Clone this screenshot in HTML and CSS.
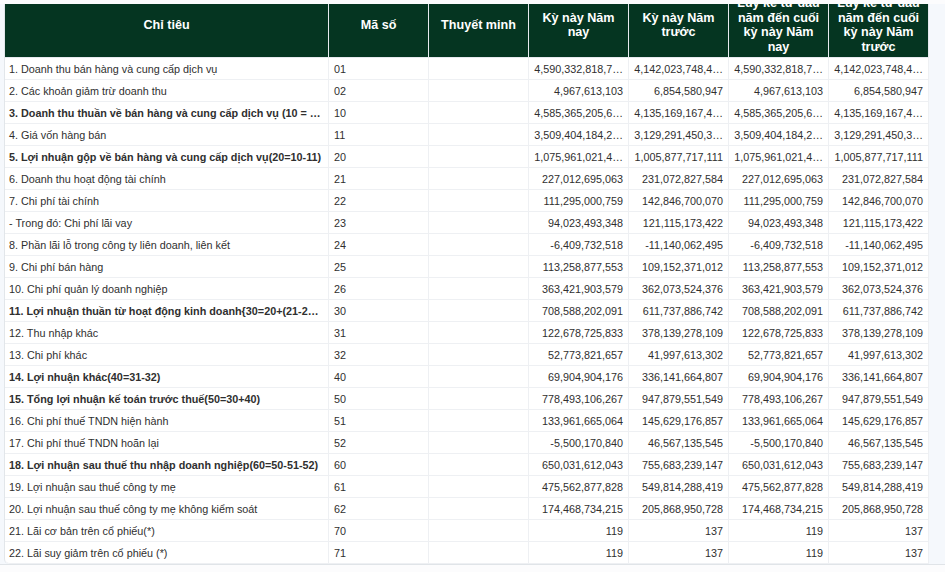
FILE: index.html
```html
<!DOCTYPE html>
<html lang="vi">
<head>
<meta charset="utf-8">
<title>Báo cáo kết quả kinh doanh</title>
<link rel="stylesheet" href="styles.css">
</head>
<body>
<div class="card">
<table class="report">
<colgroup><col class="c-name"><col class="c-col"><col class="c-col"><col class="c-col"><col class="c-col"><col class="c-col"><col class="c-col"></colgroup>
<thead>
<tr><th>Chỉ tiêu</th><th>Mã số</th><th>Thuyết minh</th><th>Kỳ này Năm nay</th><th>Kỳ này Năm trước</th><th>Lũy kế từ đầu năm đến cuối kỳ này Năm nay</th><th>Lũy kế từ đầu năm đến cuối kỳ này Năm trước</th></tr>
</thead>
<tbody>
<tr><td>1. Doanh thu bán hàng và cung cấp dịch vụ</td><td>01</td><td></td><td class="n">4,590,332,818,7…</td><td class="n">4,142,023,748,4…</td><td class="n">4,590,332,818,7…</td><td class="n">4,142,023,748,4…</td></tr>
<tr><td>2. Các khoản giảm trừ doanh thu</td><td>02</td><td></td><td class="n">4,967,613,103</td><td class="n">6,854,580,947</td><td class="n">4,967,613,103</td><td class="n">6,854,580,947</td></tr>
<tr class="b"><td>3. Doanh thu thuần về bán hàng và cung cấp dịch vụ (10 = …</td><td>10</td><td></td><td class="n">4,585,365,205,6…</td><td class="n">4,135,169,167,4…</td><td class="n">4,585,365,205,6…</td><td class="n">4,135,169,167,4…</td></tr>
<tr><td>4. Giá vốn hàng bán</td><td>11</td><td></td><td class="n">3,509,404,184,2…</td><td class="n">3,129,291,450,3…</td><td class="n">3,509,404,184,2…</td><td class="n">3,129,291,450,3…</td></tr>
<tr class="b"><td>5. Lợi nhuận gộp về bán hàng và cung cấp dịch vụ(20=10-11)</td><td>20</td><td></td><td class="n">1,075,961,021,4…</td><td class="n">1,005,877,717,111</td><td class="n">1,075,961,021,4…</td><td class="n">1,005,877,717,111</td></tr>
<tr><td>6. Doanh thu hoạt động tài chính</td><td>21</td><td></td><td class="n">227,012,695,063</td><td class="n">231,072,827,584</td><td class="n">227,012,695,063</td><td class="n">231,072,827,584</td></tr>
<tr><td>7. Chi phí tài chính</td><td>22</td><td></td><td class="n">111,295,000,759</td><td class="n">142,846,700,070</td><td class="n">111,295,000,759</td><td class="n">142,846,700,070</td></tr>
<tr><td>- Trong đó: Chi phí lãi vay</td><td>23</td><td></td><td class="n">94,023,493,348</td><td class="n">121,115,173,422</td><td class="n">94,023,493,348</td><td class="n">121,115,173,422</td></tr>
<tr><td>8. Phần lãi lỗ trong công ty liên doanh, liên kết</td><td>24</td><td></td><td class="n">-6,409,732,518</td><td class="n">-11,140,062,495</td><td class="n">-6,409,732,518</td><td class="n">-11,140,062,495</td></tr>
<tr><td>9. Chi phí bán hàng</td><td>25</td><td></td><td class="n">113,258,877,553</td><td class="n">109,152,371,012</td><td class="n">113,258,877,553</td><td class="n">109,152,371,012</td></tr>
<tr><td>10. Chi phí quản lý doanh nghiệp</td><td>26</td><td></td><td class="n">363,421,903,579</td><td class="n">362,073,524,376</td><td class="n">363,421,903,579</td><td class="n">362,073,524,376</td></tr>
<tr class="b"><td>11. Lợi nhuận thuần từ hoạt động kinh doanh{30=20+(21-2…</td><td>30</td><td></td><td class="n">708,588,202,091</td><td class="n">611,737,886,742</td><td class="n">708,588,202,091</td><td class="n">611,737,886,742</td></tr>
<tr><td>12. Thu nhập khác</td><td>31</td><td></td><td class="n">122,678,725,833</td><td class="n">378,139,278,109</td><td class="n">122,678,725,833</td><td class="n">378,139,278,109</td></tr>
<tr><td>13. Chi phí khác</td><td>32</td><td></td><td class="n">52,773,821,657</td><td class="n">41,997,613,302</td><td class="n">52,773,821,657</td><td class="n">41,997,613,302</td></tr>
<tr class="b"><td>14. Lợi nhuận khác(40=31-32)</td><td>40</td><td></td><td class="n">69,904,904,176</td><td class="n">336,141,664,807</td><td class="n">69,904,904,176</td><td class="n">336,141,664,807</td></tr>
<tr class="b"><td>15. Tổng lợi nhuận kế toán trước thuế(50=30+40)</td><td>50</td><td></td><td class="n">778,493,106,267</td><td class="n">947,879,551,549</td><td class="n">778,493,106,267</td><td class="n">947,879,551,549</td></tr>
<tr><td>16. Chi phí thuế TNDN hiện hành</td><td>51</td><td></td><td class="n">133,961,665,064</td><td class="n">145,629,176,857</td><td class="n">133,961,665,064</td><td class="n">145,629,176,857</td></tr>
<tr><td>17. Chi phí thuế TNDN hoãn lại</td><td>52</td><td></td><td class="n">-5,500,170,840</td><td class="n">46,567,135,545</td><td class="n">-5,500,170,840</td><td class="n">46,567,135,545</td></tr>
<tr class="b"><td>18. Lợi nhuận sau thuế thu nhập doanh nghiệp(60=50-51-52)</td><td>60</td><td></td><td class="n">650,031,612,043</td><td class="n">755,683,239,147</td><td class="n">650,031,612,043</td><td class="n">755,683,239,147</td></tr>
<tr><td>19. Lợi nhuận sau thuế công ty mẹ</td><td>61</td><td></td><td class="n">475,562,877,828</td><td class="n">549,814,288,419</td><td class="n">475,562,877,828</td><td class="n">549,814,288,419</td></tr>
<tr><td>20. Lợi nhuận sau thuế công ty mẹ không kiểm soát</td><td>62</td><td></td><td class="n">174,468,734,215</td><td class="n">205,868,950,728</td><td class="n">174,468,734,215</td><td class="n">205,868,950,728</td></tr>
<tr><td>21. Lãi cơ bản trên cổ phiếu(*)</td><td>70</td><td></td><td class="n">119</td><td class="n">137</td><td class="n">119</td><td class="n">137</td></tr>
<tr><td>22. Lãi suy giảm trên cổ phiếu (*)</td><td>71</td><td></td><td class="n">119</td><td class="n">137</td><td class="n">119</td><td class="n">137</td></tr>
</tbody>
</table>
</div>
</body>
</html>
```
FILE: styles.css
```css
html, body { margin: 0; height: 100%; }
body {
  background: #fcfcfd;
  font-family: "Liberation Sans", Arial, sans-serif;
  color: #2f2f2f;
  overflow: hidden;
  padding-top: 4px;
  box-sizing: border-box;
}
.card {
  height: 561px;
  box-sizing: border-box;
  padding-left: 4px;
  overflow: hidden;
  background: #f5f8fc;
  border-bottom: 1px solid #e0e4e8;
}
.report {
  table-layout: fixed;
  width: 925px;
  margin-top: -13px;
  border-collapse: separate;
  border-spacing: 0;
  border-left: 1px solid #e2e6ea;
  border-bottom-left-radius: 5px;
  background: #fff;
}
.c-name { width: 324px; }
.c-col { width: 100px; }
th {
  background: #053521;
  color: #fff;
  font-size: 12.6px;
  line-height: 14.5px;
  font-weight: 700;
  text-align: center;
  padding: 5px 6px 3px;
  border-right: 1px solid #e6e9ee;
  border-bottom: 1px solid #e6e9ee;
}
td {
  height: 21px;
  padding: 0 5px;
  font-size: 10.8px;
  white-space: nowrap;
  overflow: hidden;
  border-right: 1px solid #eef0f3;
  border-bottom: 1px solid #eef0f3;
}
td:first-child { padding-left: 4px; }
tbody tr:last-child td:first-child { border-bottom-left-radius: 5px; }
.n { text-align: right; }
.b td:first-child { font-weight: 700; }
```
